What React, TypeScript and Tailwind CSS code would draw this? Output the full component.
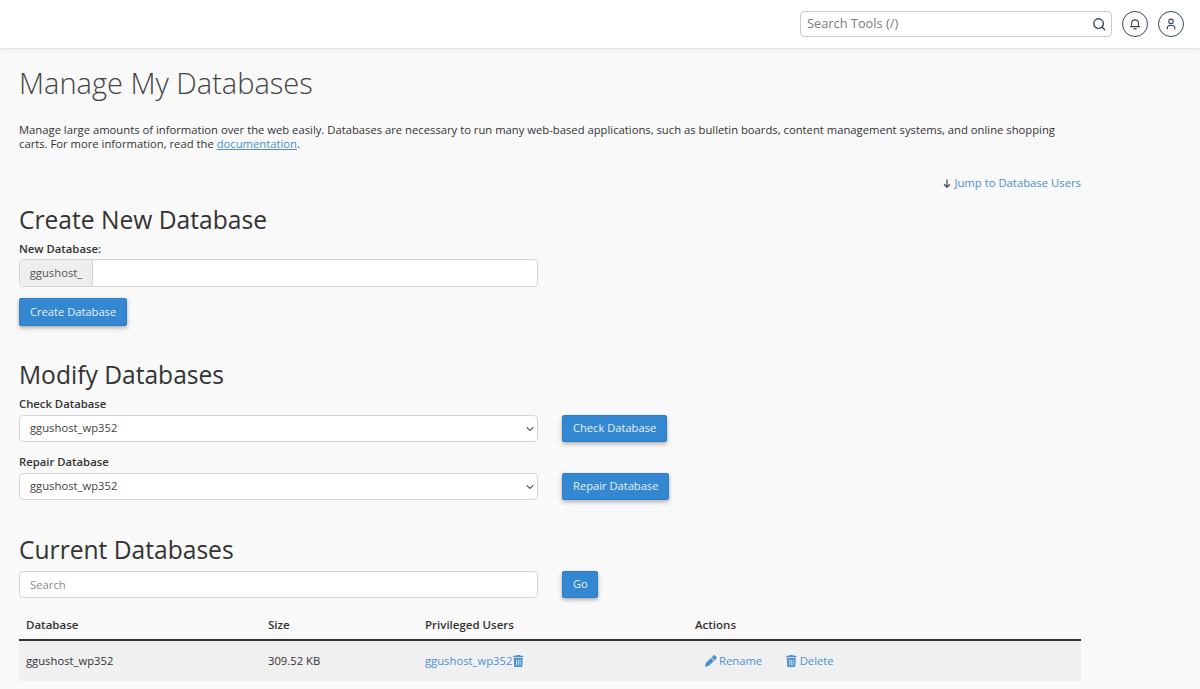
import { ChevronDown } from "lucide-react";

const font = { fontFamily: '"Open Sans", sans-serif' };

function TrashIcon({ className }: { className?: string }) {
  return (
    <svg viewBox="0 0 448 512" className={className} fill="currentColor">
      <path d="M135 17.7 128 32H32C14.300 32 0 46.300 0 64s14.300 32 32 32h384c17.700 0 32-14.300 32-32s-14.300-32-32-32h-96l-7-14.300C307.600 6.800 296.500 0 284.400 0H163.600c-12.100 0-23.200 6.800-28.600 17.700zM32 128l21.200 339c1.600 25.300 22.600 45 47.900 45h245.800c25.300 0 46.300-19.700 47.900-45L416 128H32zm112 64c8.800 0 16 7.200 16 16v224c0 8.800-7.200 16-16 16s-16-7.200-16-16V208c0-8.800 7.200-16 16-16zm80 0c8.800 0 16 7.200 16 16v224c0 8.800-7.200 16-16 16s-16-7.200-16-16V208c0-8.800 7.200-16 16-16zm80 0c8.800 0 16 7.200 16 16v224c0 8.800-7.200 16-16 16s-16-7.200-16-16V208c0-8.800 7.200-16 16-16z" />
    </svg>
  );
}

function PencilIcon({ className }: { className?: string }) {
  return (
    <svg viewBox="0 0 512 512" className={className} fill="currentColor">
      <path d="M410.300 231 480 161.300c25-25 25-65.500 0-90.500L441.200 32c-25-25-65.500-25-90.500 0L281 101.700 410.300 231zM258.400 124.300 47.600 335.100c-6.200 6.200-10.700 13.900-13.200 22.400L1 471.200c-2.400 8.400-.1 17.500 6.100 23.700s15.300 8.500 23.700 6.100l113.700-33.400c8.500-2.500 16.200-7 22.400-13.200L377.700 253.600 258.400 124.300z" />
    </svg>
  );
}

function Header() {
  return (
    <div className="flex h-12 items-center justify-end bg-white pr-4 shadow-[0_1px_3px_rgba(0,0,0,0.1)]">
      <div className="flex h-[26px] w-[312px] items-center justify-between rounded border border-[#c9ccd0] bg-white pl-[6px] pr-[5px]">
        <span className="text-[12.800px] text-[#7b7b7b]">Search Tools (/)</span>
        <svg viewBox="0 0 16 16" className="h-[14px] w-[14px] text-[#33475b]" fill="none" stroke="currentColor" strokeWidth="1.500">
          <circle cx="7.500" cy="7.500" r="5.500" />
          <path d="M11.500 11.500 14.500 14.500" strokeLinecap="round" />
        </svg>
      </div>
      <div className="ml-[10px] flex h-[26px] w-[26px] items-center justify-center rounded-full border border-[#33475b] text-[#33475b]">
        <svg viewBox="0 0 16 16" className="h-[12px] w-[12px]" fill="none" stroke="currentColor" strokeWidth="1.500">
          <path d="M3.500 11.500V7a4.500 4.500 0 0 1 9 0v4.500M2 11.500h12" strokeLinecap="round" />
          <path d="M6.500 14.500h3" strokeLinecap="round" />
        </svg>
      </div>
      <div className="ml-[10px] flex h-[26px] w-[26px] items-center justify-center rounded-full border border-[#33475b] text-[#33475b]">
        <svg viewBox="0 0 16 16" className="h-[12px] w-[12px]" fill="none" stroke="currentColor" strokeWidth="1.500">
          <circle cx="8" cy="4.500" r="3" />
          <path d="M3 14.500v-1.500a3.500 3.500 0 0 1 3.500-3h3a3.500 3.500 0 0 1 3.500 3v1.500" strokeLinecap="round" />
        </svg>
      </div>
    </div>
  );
}

function BlueButton({ label, className }: { label: string; className?: string }) {
  return (
    <button className={`rounded-[2px] border border-[#2f7cc0] bg-[#3488d1] px-[10px] text-[11.150px] text-[#e6f1fa] shadow-[0_2px_4px_rgba(0,0,0,0.3)] ${className ?? ""}`}>
      {label}
    </button>
  );
}

function SelectRow({ label, button }: { label: string; button: string }) {
  return (
    <div>
      <div className="text-[11.300px] font-semibold leading-[17px] text-[#333]">{label}</div>
      <div className="mt-[3px] flex items-center">
        <div className="flex h-[27px] w-[519px] items-center justify-between rounded border border-[#d5d5d5] bg-white pl-[10px] pr-[1px] text-[11.250px] text-[#444]">
          ggushost_wp352
          <ChevronDown className="h-3 w-3 text-[#666]" strokeWidth={2.200} />
        </div>
        <BlueButton label={button} className="ml-6 h-[27px]" />
      </div>
    </div>
  );
}

export default function App() {
  return (
    <div className="min-h-[689px] overflow-hidden bg-[#f9f9f9] text-[#333]" style={font}>
      <Header />
      <div className="w-[1081px] pl-[19px]">
        <h1 className="mt-[14px] text-[29px] font-light leading-[42px] text-[#444]">Manage My Databases</h1>
        <p className="mt-[19px] text-[11.250px] leading-[14px] text-[#333]">
          Manage large amounts of information over the web easily. Databases are necessary to run many web-based applications, such as bulletin boards, content management systems, and online shopping carts. For more information, read the <a className="text-[#4a90d0] underline">documentation</a>.
        </p>
        <div className="mt-6 flex items-center justify-end text-[11.300px] leading-[16px] text-[#4a90d0]">
          <svg viewBox="0 0 10 12" className="mr-[3px] h-[9px] w-2 text-[#33475b]" fill="none" stroke="currentColor" strokeWidth="1.600">
            <path d="M5 0.500V11M1 7l4 4 4-4" />
          </svg>
          Jump to Database Users
        </div>

        <h2 className="mt-3 text-[24.600px] leading-[34px] text-[#333]">Create New Database</h2>
        <div className="mt-[3px] text-[11.300px] font-semibold leading-[17px] text-[#333]">New Database:</div>
        <div className="mt-[2px] flex h-[28px] w-[519px] rounded border border-[#d5d5d5] bg-white">
          <div className="flex w-[73px] items-center justify-center rounded-l border-r border-[#d5d5d5] bg-[#eeeeee] text-[11.300px] text-[#555]">ggushost_</div>
        </div>
        <BlueButton label="Create Database" className="mt-[11px] block h-7" />

        <h2 className="mt-[32px] text-[24.600px] leading-[34px] text-[#333]">Modify Databases</h2>
        <div className="mt-[3px]">
          <SelectRow label="Check Database" button="Check Database" />
        </div>
        <div className="mt-[11px]">
          <SelectRow label="Repair Database" button="Repair Database" />
        </div>

        <h2 className="mt-[33px] text-[24.600px] leading-[34px] text-[#333]">Current Databases</h2>
        <div className="mt-1 flex items-center">
          <div className="flex h-[27px] w-[519px] items-center rounded border border-[#d5d5d5] bg-white pl-[10px] pt-px text-[11.300px] text-[#8a8a8a]">Search</div>
          <BlueButton label="Go" className="ml-6 h-[27px] w-9 px-0" />
        </div>

        <div className="mt-[18px] grid grid-cols-[242px_157px_270px_1fr] border-b-2 border-[#333] pb-[6px] pl-[7px] text-[11.500px] font-semibold leading-[17px] text-[#333]">
          <div>Database</div>
          <div>Size</div>
          <div>Privileged Users</div>
          <div>Actions</div>
        </div>
        <div className="grid h-10 grid-cols-[242px_157px_270px_1fr] items-center bg-[#f0f0f0] pl-[7px] text-[11.250px] text-[#333]">
          <div>ggushost_wp352</div>
          <div>309.52 KB</div>
          <div className="flex items-center text-[#4a90d0]">
            ggushost_wp352
            <TrashIcon className="ml-px h-3 w-[10.500px]" />
          </div>
          <div className="flex items-center pl-[10px] text-[#4a90d0]">
            <PencilIcon className="mr-[2px] h-3 w-3" />
            Rename
            <TrashIcon className="ml-[24px] mr-[3px] h-3 w-[10.500px]" />
            Delete
          </div>
        </div>
      </div>
    </div>
  );
}
